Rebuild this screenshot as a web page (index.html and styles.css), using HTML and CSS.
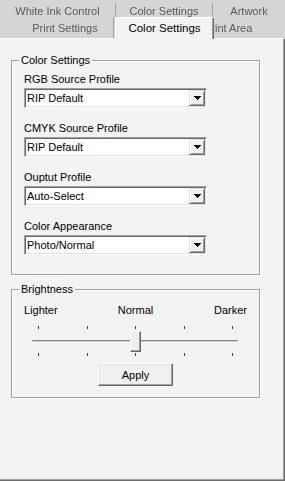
FILE: index.html
```html
<!DOCTYPE html>
<html>
<head>
<meta charset="utf-8">
<link rel="stylesheet" href="styles.css">
</head>
<body>
<div class="window">
  <div class="tabs">
    <div class="tab-row back">
      <div class="tab t-white"><span>White Ink Control</span></div>
      <div class="tab t-color2"><span>Color Settings</span></div>
      <div class="tab t-artwork"><span>Artwork</span></div>
    </div>
    <div class="tab-row front">
      <div class="tab t-print"><span>Print Settings</span></div>
      <div class="tab selected">Color Settings</div>
      <div class="tab t-area"><span>Print Area</span></div>
    </div>
  </div>
  <div class="panel">
    <div class="group colors">
      <div class="legend">Color Settings</div>
      <div class="field">
        <div class="label">RGB Source Profile</div>
        <div class="select"><span class="value">RIP Default</span><span class="drop"><svg width="7" height="4" viewBox="0 0 7 4"><path d="M0 0h7v1H0zM1 1h5v1H1zM2 2h3v1H2zM3 3h1v1H3z" fill="#000"/></svg></span></div>
      </div>
      <div class="field">
        <div class="label">CMYK Source Profile</div>
        <div class="select"><span class="value">RIP Default</span><span class="drop"><svg width="7" height="4" viewBox="0 0 7 4"><path d="M0 0h7v1H0zM1 1h5v1H1zM2 2h3v1H2zM3 3h1v1H3z" fill="#000"/></svg></span></div>
      </div>
      <div class="field">
        <div class="label">Ouptut Profile</div>
        <div class="select"><span class="value">Auto-Select</span><span class="drop"><svg width="7" height="4" viewBox="0 0 7 4"><path d="M0 0h7v1H0zM1 1h5v1H1zM2 2h3v1H2zM3 3h1v1H3z" fill="#000"/></svg></span></div>
      </div>
      <div class="field">
        <div class="label">Color Appearance</div>
        <div class="select"><span class="value">Photo/Normal</span><span class="drop"><svg width="7" height="4" viewBox="0 0 7 4"><path d="M0 0h7v1H0zM1 1h5v1H1zM2 2h3v1H2zM3 3h1v1H3z" fill="#000"/></svg></span></div>
      </div>
    </div>
    <div class="group brightness">
      <div class="legend">Brightness</div>
      <div class="scale-labels">
        <span class="lo">Lighter</span>
        <span class="mid">Normal</span>
        <span class="hi">Darker</span>
      </div>
      <div class="slider">
        <div class="ticks"><i></i><i></i><i></i><i></i><i></i></div>
        <div class="rail">
          <div class="track"></div>
          <div class="thumb"></div>
        </div>
        <div class="ticks bottom"><i></i><i></i><i></i><i></i><i></i></div>
      </div>
      <button class="apply">Apply</button>
    </div>
  </div>
</div>
</body>
</html>
```
FILE: styles.css
```css
* { box-sizing: border-box; }
html, body { margin: 0; padding: 0; }
body {
  width: 285px;
  height: 481px;
  overflow: hidden;
  background: #d5d5d5;
  font-family: "Liberation Sans", Arial, sans-serif;
  font-size: 11px;
  color: #000;
}
.window { display: flex; flex-direction: column; height: 481px; }
.tabs { height: 38px; flex: none; }
.tab-row { display: flex; }
.back { height: 17px; padding-top: 3px; }
.back .tab {
  height: 14px;
  line-height: 16px;
  text-align: center;
  color: #5a5a5a;
  white-space: nowrap;
  border-right: 1px solid #a4a4a4;
}
.tab span { display: inline-block; filter: blur(0.4px); }
.t-white { width: 116px; }
.t-color2 { width: 97px; }
.back .t-artwork { flex: 1; border-right: none; }
.front { height: 21px; align-items: flex-start; }
.front .tab { white-space: nowrap; }
.t-print {
  margin-left: 17px;
  width: 97px;
  height: 21px;
  padding-top: 2px;
  line-height: 19px;
  text-align: center;
  color: #5a5a5a;
  border-right: 1px solid #a4a4a4;
}
.selected {
  position: relative;
  z-index: 1;
  margin-left: 1px;
  margin-right: -14px;
  width: 99px;
  height: 22px;
  background: #f3f3f3;
  border-top: 1px solid #fff;
  border-left: 1px solid #fff;
  border-right: 1px solid #696969;
  box-shadow: inset -1px 0 #a0a0a0;
  border-radius: 2px 2px 0 0;
  font-size: 11.5px;
  line-height: 20px;
  text-align: center;
  color: #000;
}
.t-area {
  flex: 1;
  height: 21px;
  padding: 2px 0 0 4px;
  line-height: 19px;
  color: #5a5a5a;
  overflow: hidden;
}
.panel {
  flex: 1;
  background: #f3f3f3;
  border-top: 1px solid #fff;
  border-right: 1px solid #6c6c6c;
  border-bottom: 1px solid #6c6c6c;
  box-shadow: inset -1px -1px #a0a0a0;
  padding: 21px 0 0 11px;
}
.group {
  width: 249px;
  border: 1px solid #a0a0a0;
  box-shadow: inset 1px 1px #fff, 1px 1px #fff;
  padding: 0 12px 19px;
}
.legend {
  display: table;
  margin: -8px 0 5px -5px;
  padding: 0 2px;
  line-height: 14px;
  background: #f3f3f3;
}
.field + .field { margin-top: 13px; }
.label { line-height: 14px; margin-bottom: 2px; white-space: nowrap; }
.select {
  display: flex;
  width: 183px;
  height: 20px;
  background: #fff;
  border: 1px solid;
  border-color: #a0a0a0 #fff #fff #a0a0a0;
  box-shadow: inset 1px 1px #696969, inset -1px -1px #e3e3e3;
}
.value { flex: 1; line-height: 18px; padding-left: 2px; white-space: nowrap; }
.drop {
  width: 16px;
  height: 16px;
  margin: 1px;
  display: flex;
  align-items: center;
  justify-content: center;
  background: #f0f0f0;
  border: 1px solid;
  border-color: #e3e3e3 #696969 #696969 #e3e3e3;
  box-shadow: inset 1px 1px #fff, inset -1px -1px #a0a0a0;
}
.drop svg { display: block; }
.brightness { margin-top: 14px; padding-bottom: 11px; }
.brightness .legend { margin-bottom: 7px; }
.scale-labels {
  display: grid;
  grid-template-columns: 1fr auto 1fr;
  line-height: 14px;
}
.scale-labels .lo { justify-self: start; }
.scale-labels .hi { justify-self: end; }
.slider { width: 206px; margin: 9px 0 0 8px; }
.ticks {
  display: flex;
  justify-content: space-between;
  height: 3px;
  padding: 0 5px 0 6px;
}
.ticks i { display: block; width: 1px; height: 3px; background: #3a3a3a; }
.ticks.bottom { margin-top: 1px; }
.rail { position: relative; height: 23px; padding-top: 11px; }
.track {
  height: 3px;
  border-top: 1px solid #8a8a8a;
  border-bottom: 1px solid #fff;
  background: #c8c8c8;
  border-radius: 1px;
}
.thumb {
  position: absolute;
  left: 98px;
  top: 2px;
  width: 11px;
  height: 21px;
  background: #f0f0f0;
  border: 1px solid;
  border-color: #fff #696969 #696969 #fff;
  box-shadow: inset -1px -1px #a0a0a0;
}
.apply {
  display: block;
  width: 75px;
  height: 23px;
  margin: 7px auto 0;
  padding: 0;
  font: inherit;
  color: #000;
  background: #f0f0f0;
  border: 1px solid;
  border-color: #fff #696969 #696969 #fff;
  box-shadow: inset -1px -1px #a0a0a0, inset 1px 1px #e3e3e3;
}
```
